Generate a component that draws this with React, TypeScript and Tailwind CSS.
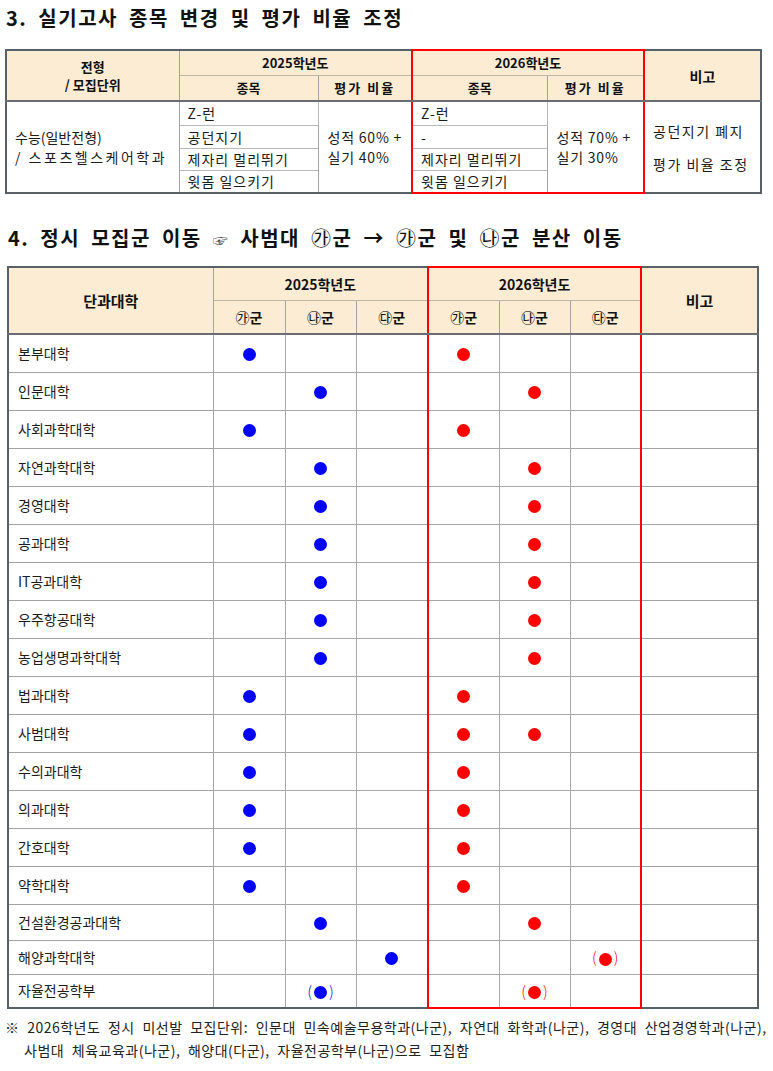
import React from "react";

const KR = "font-['Noto_Sans_CJK_KR','Noto_Sans',sans-serif]";

type Mark = 0 | 1 | 2;

// 0: 없음, 1: ●, 2: (●)
const colleges: [string, Mark[], Mark[]][] = [
  ["본부대학", [1, 0, 0], [1, 0, 0]],
  ["인문대학", [0, 1, 0], [0, 1, 0]],
  ["사회과학대학", [1, 0, 0], [1, 0, 0]],
  ["자연과학대학", [0, 1, 0], [0, 1, 0]],
  ["경영대학", [0, 1, 0], [0, 1, 0]],
  ["공과대학", [0, 1, 0], [0, 1, 0]],
  ["IT공과대학", [0, 1, 0], [0, 1, 0]],
  ["우주항공대학", [0, 1, 0], [0, 1, 0]],
  ["농업생명과학대학", [0, 1, 0], [0, 1, 0]],
  ["법과대학", [1, 0, 0], [1, 0, 0]],
  ["사범대학", [1, 0, 0], [1, 1, 0]],
  ["수의과대학", [1, 0, 0], [1, 0, 0]],
  ["의과대학", [1, 0, 0], [1, 0, 0]],
  ["간호대학", [1, 0, 0], [1, 0, 0]],
  ["약학대학", [1, 0, 0], [1, 0, 0]],
  ["건설환경공과대학", [0, 1, 0], [0, 1, 0]],
  ["해양과학대학", [0, 0, 1], [0, 0, 2]],
  ["자율전공학부", [0, 2, 0], [0, 2, 0]],
];

const rowH = (i: number) => {
  if (i < 15) return "h-[38px]";
  if (i === 15) return "h-[36px]";
  return "h-[34px]";
};

const Dot = ({ red, mark }: { red?: boolean; mark: Mark }) => {
  if (!mark) return null;
  const dot = (
    <span
      className={`inline-block w-[13px] h-[13px] rounded-full align-middle ${
        red ? "bg-[#ff0000]" : "bg-[#0000ff]"
      }`}
    />
  );
  if (mark === 1) return dot;
  return (
    <span
      className={`inline-flex items-center gap-[2px] text-[15px] font-light ${
        red ? "text-[#ff0000]" : "text-[#0000ff]"
      }`}
    >
      (<span className="mt-[1px]">{dot}</span>)
    </span>
  );
};

// 원문자 (㉮ ㉯ ㉰)
const Circ = ({ ch }: { ch: string }) => <span className="font-normal">{ch}</span>;

const cell = "border border-[#a3a3a3]";
const head = "bg-[#fbecd3] font-bold text-[#111]";

export default function App() {
  return (
    <div className={`${KR} w-[773px] h-[1071px] bg-white text-[#1b1b1b] overflow-hidden`}>
      <h2 className="pt-[6px] pl-[6px] h-[30px] text-[20px] leading-[24px] font-bold tracking-[1.5px] [word-spacing:5px] text-[#111]">
        3. 실기고사 종목 변경 및 평가 비율 조정
      </h2>

      <table className="mt-[19px] ml-[5px] w-[755px] border-collapse border-2 border-[#596066] text-[14px] table-fixed">
        <colgroup>
          <col className="w-[173px]" />
          <col className="w-[139px]" />
          <col className="w-[94px]" />
          <col className="w-[135px]" />
          <col className="w-[97px]" />
          <col className="w-[117px]" />
        </colgroup>
        <thead className="text-[13px] leading-[18px]">
          <tr className="h-[25px]">
            <th rowSpan={2} className={`${cell} ${head} border-b-2 border-b-[#6a6e72]`}>
              전형
              <br />/ 모집단위
            </th>
            <th colSpan={2} className={`${cell} ${head} border-b-[#bdb6a8]`}>
              2025학년도
            </th>
            <th
              colSpan={2}
              className={`${cell} ${head} border-2 border-[#ff0000] border-b border-b-[#bdb6a8]`}
            >
              2026학년도
            </th>
            <th rowSpan={2} className={`${cell} ${head} text-[14px] border-b-2 border-b-[#6a6e72]`}>
              비고
            </th>
          </tr>
          <tr className="h-[26px]">
            <th className={`${cell} ${head} border-b-2 border-b-[#6a6e72]`}>종목</th>
            <th className={`${cell} ${head} tracking-[2px] border-b-2 border-b-[#6a6e72]`}>평가 비율</th>
            <th className={`${cell} ${head} border-l-2 border-l-[#ff0000] border-b-2 border-b-[#6a6e72]`}>
              종목
            </th>
            <th
              className={`${cell} ${head} tracking-[2px] border-r-2 border-r-[#ff0000] border-b-2 border-b-[#6a6e72]`}
            >
              평가 비율
            </th>
          </tr>
        </thead>
        <tbody className="leading-[18px]">
          {[
            ["Z-런", "Z-런", "h-[24px]"],
            ["공던지기", "-", "h-[23px]"],
            ["제자리 멀리뛰기", "제자리 멀리뛰기", "h-[22px]"],
            ["윗몸 일으키기", "윗몸 일으키기", "h-[23px]"],
          ].map(([a, b, h], i) => (
            <tr key={i} className={h}>
              {i === 0 && (
                <td rowSpan={4} className={`${cell} pl-[8px] leading-[20px]`}>
                  수능(일반전형)
                  <br />
                  <span className="tracking-[2.5px]">/ 스포츠헬스케어학과</span>
                </td>
              )}
              <td className={`${cell} pl-[8px] tracking-[1px] border-[#b8b8b8]`}>{a}</td>
              {i === 0 && (
                <td rowSpan={4} className={`${cell} pl-[9px] tracking-[0.8px] leading-[20px]`}>
                  성적 60% +
                  <br />
                  실기 40%
                </td>
              )}
              <td
                className={`${cell} pl-[8px] tracking-[1px] border-[#b8b8b8] border-l-2 border-l-[#ff0000] ${
                  i === 3 ? "border-b-2 border-b-[#ff0000]" : ""
                }`}
              >
                {b}
              </td>
              {i === 0 && (
                <td
                  rowSpan={4}
                  className={`${cell} pl-[9px] tracking-[0.8px] leading-[20px] border-r-2 border-r-[#ff0000] border-b-2 border-b-[#ff0000]`}
                >
                  성적 70% +
                  <br />
                  실기 30%
                </td>
              )}
              {i === 0 && (
                <td rowSpan={4} className={`${cell} pl-[8px] tracking-[1.5px]`}>
                  <div className="flex flex-col gap-[15px]">
                    <span>공던지기 폐지</span>
                    <span>평가 비율 조정</span>
                  </div>
                </td>
              )}
            </tr>
          ))}
        </tbody>
      </table>

      <h2 className="mt-[32px] pl-[8px] h-[24px] text-[20px] leading-[24px] font-bold tracking-[1.5px] [word-spacing:5px] text-[#111]">
        4. 정시 모집군 이동 <span className="font-normal text-[15px] text-[#444]">☞</span> 사범대{" "}
        <Circ ch="㉮" />군 → <Circ ch="㉮" />군 및 <Circ ch="㉯" />군 분산 이동
      </h2>

      <table className="mt-[16px] ml-[7px] w-[750px] border-collapse border-2 border-[#596066] table-fixed">
        <colgroup>
          <col className="w-[205px]" />
          <col className="w-[72px]" />
          <col className="w-[71px]" />
          <col className="w-[72px]" />
          <col className="w-[71px]" />
          <col className="w-[71px]" />
          <col className="w-[71px]" />
          <col className="w-[117px]" />
        </colgroup>
        <thead className="text-[14px] leading-[18px]">
          <tr className="h-[33px]">
            <th rowSpan={2} className={`${cell} ${head} text-[15px] border-b-2 border-b-[#6a6e72]`}>
              단과대학
            </th>
            <th colSpan={3} className={`${cell} ${head} border-b-[#bdb6a8]`}>
              2025학년도
            </th>
            <th colSpan={3} className={`${cell} ${head} border-2 border-[#ff0000] border-b border-b-[#bdb6a8]`}>
              2026학년도
            </th>
            <th rowSpan={2} className={`${cell} ${head} text-[15px] border-b-2 border-b-[#6a6e72]`}>
              비고
            </th>
          </tr>
          <tr className="h-[34px]">
            {["㉮", "㉯", "㉰", "㉮", "㉯", "㉰"].map((g, i) => (
              <th
                key={i}
                className={`${cell} ${head} border-b-2 border-b-[#6a6e72] ${
                  i === 3 ? "border-l-2 border-l-[#ff0000]" : ""
                } ${i === 5 ? "border-r-2 border-r-[#ff0000]" : ""}`}
              >
                <Circ ch={g} />군
              </th>
            ))}
          </tr>
        </thead>
        <tbody className="text-[14px]">
          {colleges.map(([name, y25, y26], r) => {
            const last = r === colleges.length - 1;
            return (
              <tr key={name} className={rowH(r)}>
                <td className={`${cell} pl-[9px] border-[#969696]`}>{name}</td>
                {y25.map((m, i) => (
                  <td key={i} className={`${cell} text-center border-[#a8a8a8]`}>
                    <Dot mark={m} />
                  </td>
                ))}
                {y26.map((m, i) => (
                  <td
                    key={i}
                    className={`${cell} text-center border-[#a8a8a8] ${
                      i === 0 ? "border-l-2 border-l-[#ff0000]" : ""
                    } ${i === 2 ? "border-r-2 border-r-[#ff0000]" : ""} ${
                      last ? "border-b-2 border-b-[#ff0000]" : ""
                    }`}
                  >
                    <Dot red mark={m} />
                  </td>
                ))}
                <td className={`${cell} border-[#969696]`} />
              </tr>
            );
          })}
        </tbody>
      </table>

      <div className="mt-[7px] pl-[5px] text-[14px] leading-[23px] tracking-[0.5px] [word-spacing:4px] text-[#222] whitespace-nowrap">
        <p>
          ※ 2026학년도 정시 미선발 모집단위: 인문대 민속예술무용학과(나군), 자연대 화학과(나군), 경영대 산업경영학과(나군),
        </p>
        <p className="pl-[19px]">사범대 체육교육과(나군), 해양대(다군), 자율전공학부(나군)으로 모집함</p>
      </div>
    </div>
  );
}
